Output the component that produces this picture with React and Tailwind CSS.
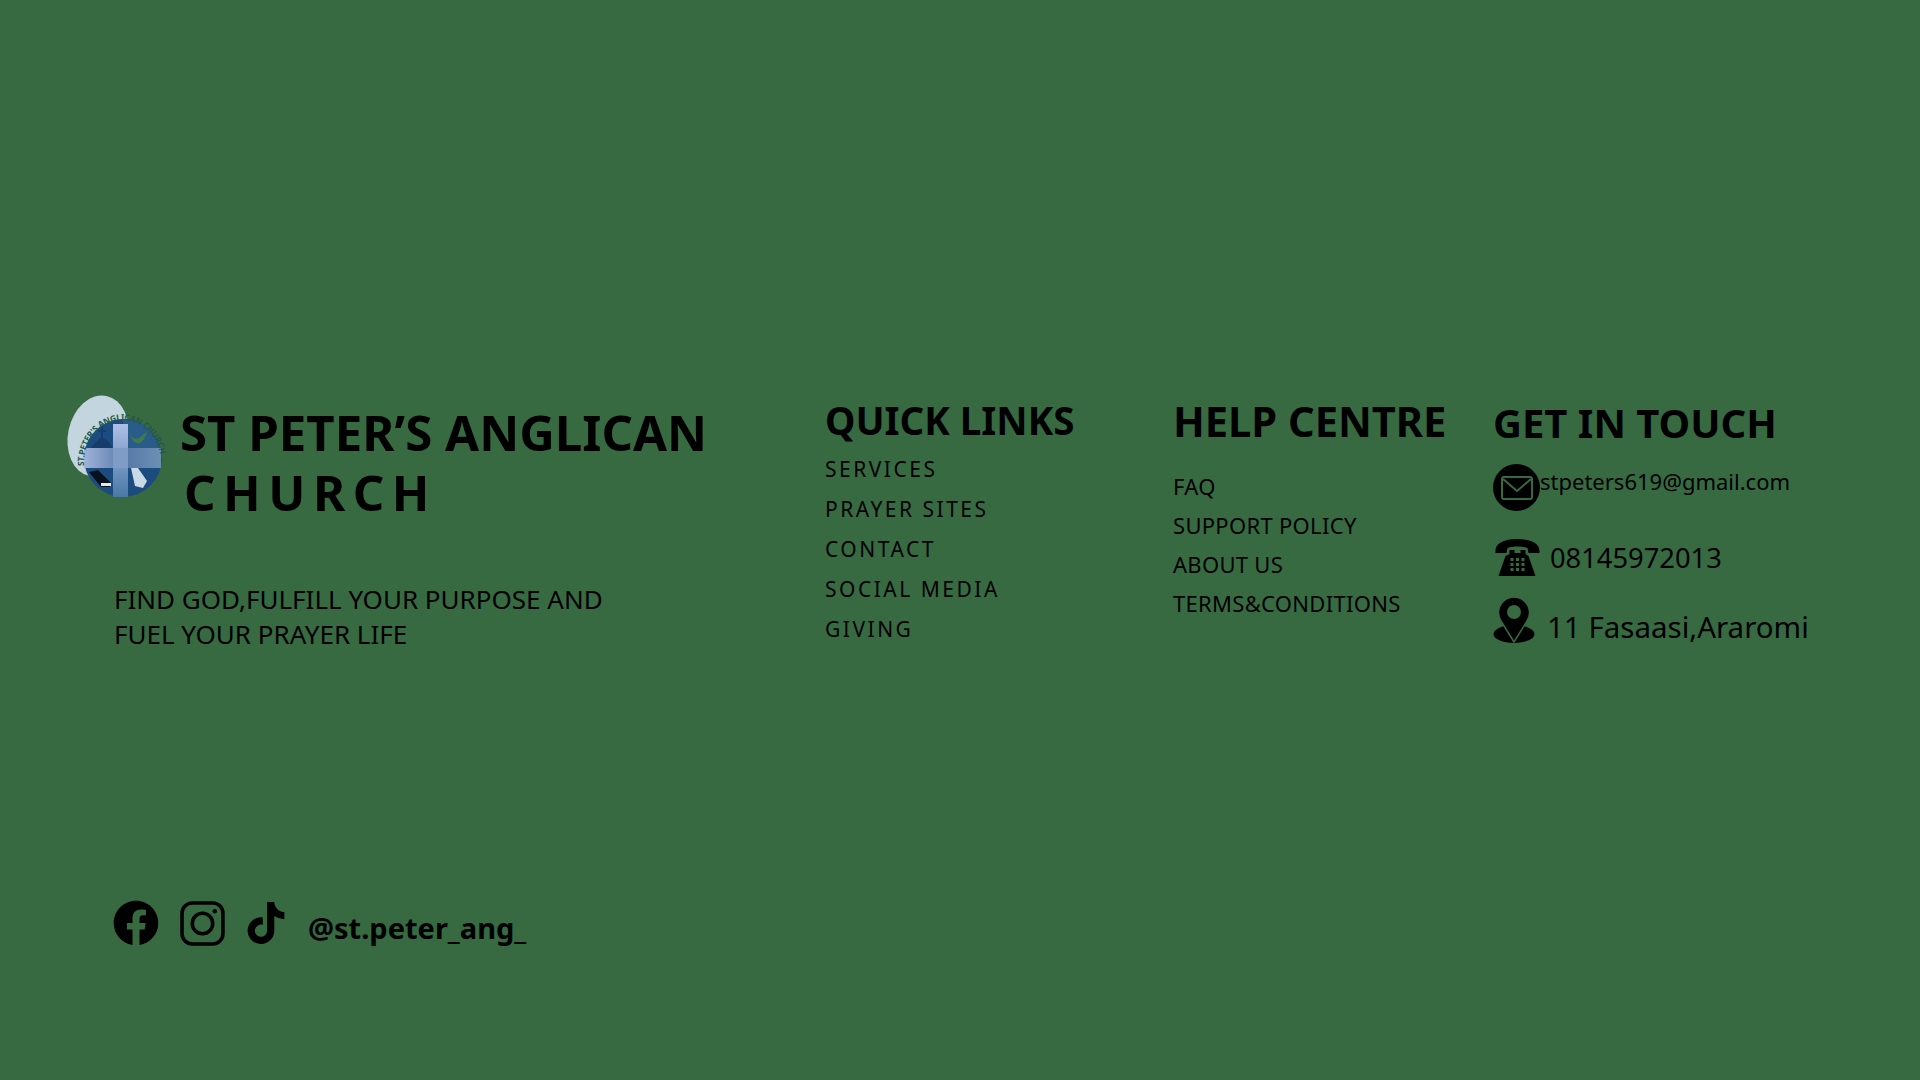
import React from "react";
import { FaFacebook, FaTiktok } from "react-icons/fa";

const quickLinks = ["SERVICES", "PRAYER SITES", "CONTACT", "SOCIAL MEDIA", "GIVING"];
const helpLinks = ["FAQ", "SUPPORT POLICY", "ABOUT US", "TERMS&CONDITIONS"];

const Logo = () => (
  <svg viewBox="0 0 130 130" className="w-[130px] h-[130px] shrink-0">
    <defs>
      <linearGradient id="bar" x1="0" x2="1" y1="0" y2="0">
        <stop offset="0" stopColor="#9fb3d8" />
        <stop offset="0.55" stopColor="#5679a8" />
        <stop offset="1" stopColor="#6c90b4" />
      </linearGradient>
      <linearGradient id="post" x1="0" x2="0" y1="0" y2="1">
        <stop offset="0" stopColor="#aebfe6" />
        <stop offset="1" stopColor="#4a78a6" />
      </linearGradient>
      <path id="ring" d="M34 86 A38 42 0 0 1 111 80" />
    </defs>
    <ellipse cx="48" cy="56" rx="30" ry="41" transform="rotate(12 48 56)" fill="#c3d5de" />
    <circle cx="73" cy="78" r="39" fill="#1c4b80" />
    <path d="M73 39 A39 39 0 0 1 112 78 L73 78 Z" fill="#2a5c8a" />
    <path d="M41 68 Q47 60 51 58 L51 52 L48 52 L48 50.5 L51 50.5 L51 47 L53 47 L53 50.5 L56 50.5 L56 52 L53 52 L53 58 Q58 60 63 68 Z" fill="#153c6a" />
    <path d="M80 56 Q85 60 89 58 Q93 55 97 51 Q95 60 90 63 Q85 65 80 56 Z" fill="#3f7a50" />
    <rect x="63" y="44" width="15" height="73" fill="url(#post)" />
    <rect x="34" y="68" width="77" height="20" fill="url(#bar)" />
    <rect x="63" y="68" width="15" height="20" fill="#7f9cc6" />
    <path d="M39 92 L48 90 L61 103 L60 107 L51 107 Z" fill="#08121c" />
    <rect x="51" y="103" width="10" height="3" fill="#e6e6e6" />
    <path d="M81 88 L88 88 L97 101 L93 108 L85 106 Z" fill="#c9d9e6" />
    <text fontFamily="'Noto Sans', sans-serif" fontSize="8.5" fontWeight="700" fill="#24584a">
      <textPath href="#ring" textLength="122">ST.PETER'S ANGLICAN CHURCH</textPath>
    </text>
  </svg>
);

const PhoneIcon = () => (
  <svg viewBox="0 0 46 38" className="w-[47px] h-[38px]" fill="#000">
    <path d="M1 12 C1 3 12 0 23 0 C34 0 45 3 45 12 L45 14 L34 14 L33 9 C27 7 19 7 13 9 L12 14 L1 14 Z" />
    <path d="M15 11 L20 11 L20 14 L26 14 L26 11 L31 11 L31 15 L34 17 L41 37 L4 37 L11 17 L15 15 Z" />
    <g fill="#386a42">
      <rect x="16" y="19" width="3" height="3" /><rect x="21.5" y="19" width="3" height="3" /><rect x="27" y="19" width="3" height="3" />
      <rect x="16" y="24" width="3" height="3" /><rect x="21.5" y="24" width="3" height="3" /><rect x="27" y="24" width="3" height="3" />
      <rect x="16" y="29" width="3" height="3" /><rect x="21.5" y="29" width="3" height="3" /><rect x="27" y="29" width="3" height="3" />
    </g>
  </svg>
);

const PinIcon = () => (
  <svg viewBox="0 0 42 46" className="w-[42px] h-[46px] shrink-0">
    <ellipse cx="21" cy="37" rx="20.5" ry="9" fill="#000" />
    <path d="M21 45 L8 24 A15.5 15.5 0 1 1 34 24 Z" fill="#000" stroke="#386a42" strokeWidth="1.5" />
    <circle cx="21" cy="15" r="7" fill="#386a42" />
  </svg>
);

const App = () => {
  return (
    <div className="min-h-screen bg-[#386a42] text-black flex pl-[66px] pt-[393px] font-['Noto_Sans',sans-serif]">
      {/* Brand */}
      <div className="w-[759px] shrink-0">
        <div className="flex items-start">
          <div className="-mt-[13px] -ml-[16px]">
            <Logo />
          </div>
          <div className="mt-[9px]">
            <div className="text-[49.2px] leading-[60px] font-bold whitespace-nowrap">ST PETER’S ANGLICAN</div>
            <div className="text-[49.2px] leading-[60px] font-bold tracking-[7.5px] ml-[4px]">CHURCH</div>
          </div>
        </div>
        <div className="mt-[60px] ml-[48px] text-[26px] leading-[35px]">
          <div>FIND GOD,FULFILL YOUR PURPOSE AND</div>
          <div>FUEL YOUR PRAYER LIFE</div>
        </div>
        <div className="mt-[245px] ml-[47px] flex items-center">
          <FaFacebook className="w-[46px] h-[46px]" />
          <svg viewBox="0 0 44 44" className="w-[45px] h-[45px] ml-[21px]" fill="none" stroke="#000" strokeWidth="3.5">
            <rect x="2" y="2" width="40" height="40" rx="10" />
            <circle cx="22" cy="22" r="10" />
            <circle cx="34" cy="10" r="2.2" fill="#000" stroke="none" />
          </svg>
          <FaTiktok className="w-[38px] h-[42px] ml-[22px]" />
          <span className="ml-[23px] mt-[9px] text-[29px] font-bold">@st.peter_ang_</span>
        </div>
      </div>

      {/* Quick links */}
      <div className="w-[348px] shrink-0">
        <div className="text-[38.5px] leading-[54px] font-bold">QUICK LINKS</div>
        <div className="mt-[7px] flex flex-col gap-[10px]">
          {quickLinks.map((item) => (
            <div key={item} className="text-[21px] leading-[30px] tracking-[2.5px]">{item}</div>
          ))}
        </div>
      </div>

      {/* Help centre */}
      <div className="w-[320px] shrink-0">
        <div className="text-[41.6px] leading-[56px] font-bold">HELP CENTRE</div>
        <div className="mt-[22px] flex flex-col gap-[9px]">
          {helpLinks.map((item) => (
            <div key={item} className="text-[22px] leading-[30px] tracking-[0.3px]">{item}</div>
          ))}
        </div>
      </div>

      {/* Contact */}
      <div>
        <div className="text-[40px] leading-[60px] font-bold whitespace-nowrap">GET IN TOUCH</div>
        <div className="mt-[11px] flex items-start">
          <div className="w-[47px] h-[47px] rounded-full bg-black flex items-center justify-center">
            <svg viewBox="0 0 32 24" className="w-[32px] h-[24px]" fill="none" stroke="#386a42" strokeWidth="2">
              <rect x="1" y="1" width="30" height="22" rx="2" />
              <path d="M2 3 L16 15 L30 3" />
            </svg>
          </div>
          <span className="text-[22px] leading-[32px] mt-[1px]">stpeters619@gmail.com</span>
        </div>
        <div className="mt-[28px] flex items-center pl-[1px]">
          <PhoneIcon />
          <span className="ml-[9px] text-[27.3px] leading-[38px]">08145972013</span>
        </div>
        <div className="mt-[20px] flex items-start">
          <PinIcon />
          <span className="ml-[12px] mt-[7px] text-[29.5px] leading-[46px]">11 Fasaasi,Araromi</span>
        </div>
      </div>
    </div>
  );
};

export default App;
